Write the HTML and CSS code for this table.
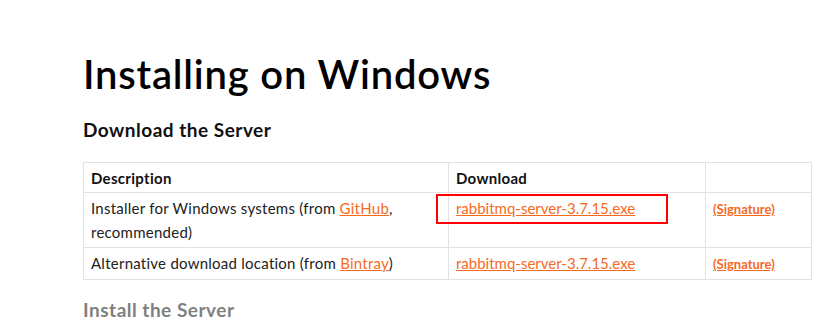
FILE: index.html
```html
<!DOCTYPE html>
<html>
<head>
<meta charset="utf-8">
<link rel="stylesheet" href="styles.css">
</head>
<body>
<main class="page">
  <h1 class="title">Installing on Windows</h1>
  <h3 class="section">Download the Server</h3>
  <table class="dl">
    <thead>
      <tr>
        <th class="c1">Description</th>
        <th class="c2">Download</th>
        <th class="c3"></th>
      </tr>
    </thead>
    <tbody>
      <tr>
        <td class="desc">Installer for Windows systems (from <a href="#">GitHub</a>, recommended)</td>
        <td class="mark-cell"><a href="#">rabbitmq-server-3.7.15.exe</a><span class="mark"></span></td>
        <td><a class="sig" href="#">(Signature)</a></td>
      </tr>
      <tr>
        <td class="desc">Alternative download location (from <a href="#">Bintray</a>)</td>
        <td><a href="#">rabbitmq-server-3.7.15.exe</a></td>
        <td><a class="sig" href="#">(Signature)</a></td>
      </tr>
    </tbody>
  </table>
  <h3 class="section muted">Install the Server</h3>
</main>
</body>
</html>
```

FILE: styles.css
```css
html, body {
  margin: 0;
  padding: 0;
  background: #fff;
}
body {
  font-family: "Lato", "Open Sans", sans-serif;
  color: #222;
}
.page {
  padding: 50px 0 0 83px;
  width: 729px;
}
.title {
  margin: 0;
  font-size: 40px;
  line-height: 48px;
  font-weight: 600;
  color: #000;
  letter-spacing: 0.8px;
}
.section {
  margin: 20px 0 20px;
  font-size: 19px;
  line-height: 24px;
  font-weight: 700;
  color: #111;
  letter-spacing: 0.5px;
}
.section.muted {
  margin-top: 18px;
  color: #808080;
}
.dl {
  width: 729px;
  border-collapse: collapse;
  font-size: 15px;
}
.dl th, .dl td {
  border: 1px solid #e2e2e2;
  padding: 3px 7px 2px;
  text-align: left;
  vertical-align: top;
  line-height: 24px;
}
.dl th {
  font-weight: 700;
  color: #111;
  letter-spacing: 0.3px;
}
.c1 { width: 350px; }
.c2 { width: 242px; }
.dl td { padding-top: 3px; padding-bottom: 3px; }
.dl td.desc { letter-spacing: 0.25px; }
.dl a {
  color: #f66a1f;
  text-decoration: underline;
}
.dl a.sig {
  font-size: 13px;
  font-weight: 700;
}
.mark-cell {
  position: relative;
}
.mark {
  position: absolute;
  left: -13px;
  top: 1px;
  width: 228px;
  height: 26px;
  border: 2px solid #f00;
}
```
